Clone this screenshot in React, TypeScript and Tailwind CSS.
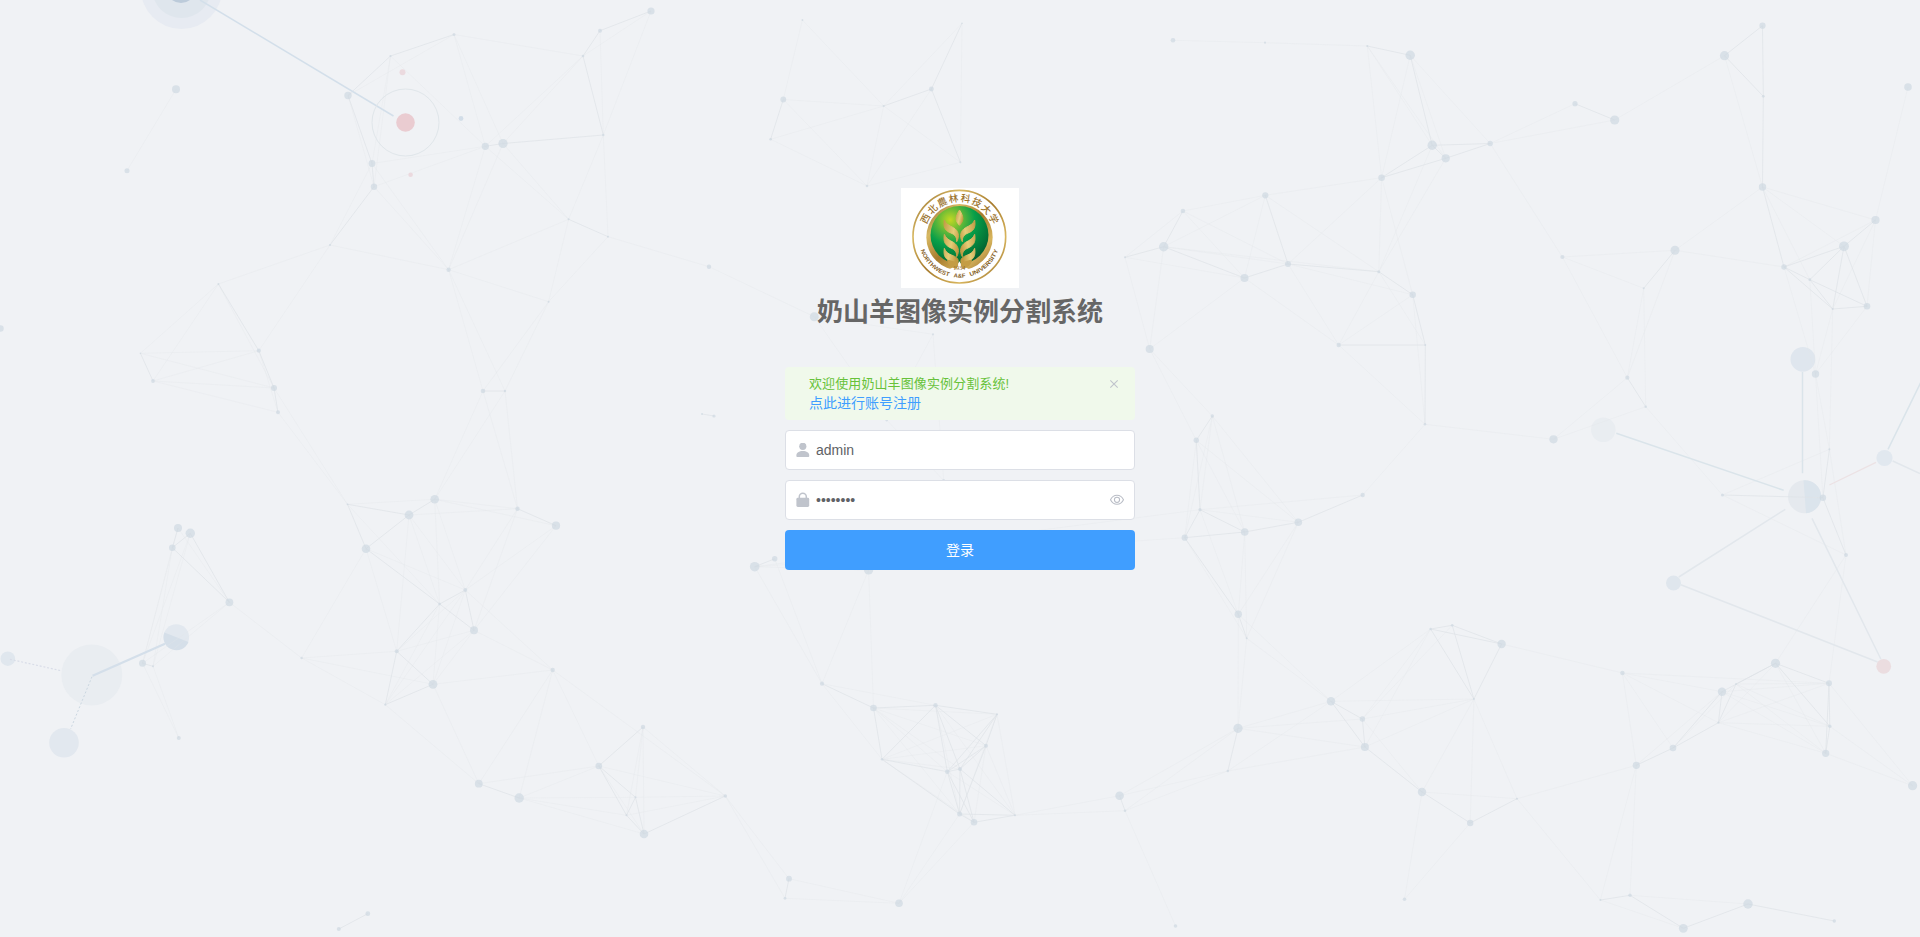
import { useState } from "react";

type Node = [number, number, number];

const nodes: Record<string, Node> = {
  a0: [176, 89.3, 4], a1: [127, 170.7, 2.5], a2: [348, 95.5, 3.7], a3: [390.5, 56, 1.1], a4: [454, 34.5, 1.5],
  a5: [583, 56, 1.3], a6: [600, 30.7, 2], a7: [651, 11, 3.6], a8: [603.3, 135, 1.2], a9: [503, 143.5, 4.6],
  a10: [485.3, 146.3, 3.6], a11: [372, 163.5, 3.4], a12: [374, 186.7, 3.2], a13: [330, 245, 1.1], a14: [448.6, 269.7, 2.2],
  a15: [568.6, 219.3, 1], a16: [608, 236.7, 1], a17: [548.6, 301.7, 1], a18: [218.4, 284, 1], a19: [709, 266.7, 2.2],
  b0: [0.5, 328.5, 3.2], b1: [140.4, 353.3, 0.7], b2: [153, 381, 1.9], b3: [258.8, 350.7, 2.1], b4: [274, 388, 3],
  b5: [278, 412.3, 2], b6: [483, 391, 2.3], b7: [505, 391, 1.2], b8: [347.5, 504.3, 0.9], b9: [434.7, 499.3, 4.3],
  b10: [409, 515, 4.4], b11: [517.5, 508.7, 2.2], b12: [556, 525.7, 4.1], b13: [366, 548.7, 4.3], b14: [178, 528, 4],
  b15: [190.3, 533.3, 4.7], b16: [172.3, 547.7, 3.3], b17: [229.4, 602.3, 3.9], b18: [465.3, 590, 2], b19: [439.6, 604, 1.3],
  c0: [474, 630.3, 4], c1: [396.7, 651.3, 2], c2: [301.6, 658, 1.2], c3: [433, 684.3, 4.4], c4: [385.3, 704.7, 1.1],
  c5: [552.7, 670, 2.2], c6: [478.8, 783.7, 3.9], c7: [519.2, 798, 4.7], c8: [598.8, 766, 3.3], c9: [635.5, 797.3, 1],
  c10: [626.5, 815.3, 1], c11: [142.5, 663.3, 3.5], c12: [153, 666.3, 1], c13: [178.8, 738, 2], c14: [338.8, 929, 2], c15: [367.8, 913.7, 2.4],
  d0: [754.7, 566.7, 4.8], d0b: [774.7, 558.8, 2.7], d1: [868.6, 570, 4.6], d2: [822, 683.7, 2.1], d3: [873.5, 708, 3.3],
  d4: [935.5, 705.3, 2.2], d5: [997, 714.3, 1], d6: [986, 745.7, 2], d7: [882, 759.3, 1.2], d8: [947.3, 771.7, 2.3],
  d9: [960, 769, 2], d10: [959.6, 814, 2.5], d11: [974, 822.3, 3.3], d12: [1015, 815.3, 1], d13: [1119.6, 795.7, 4.3],
  d14: [1125, 810.7, 1.3], d15: [1227.8, 771, 1.2], d16: [1238, 728.3, 4.6], d17: [643, 727, 2.2], d18: [725.3, 796, 1.8],
  d19: [644, 834, 4.3], d20: [789, 878.7, 2.9], d21: [785, 898.3, 1.4], d22: [899, 903.3, 3.8], d23: [1175.5, 926, 1.8],
  e0: [1149.7, 349, 4], e1: [1212.3, 416, 1.7], e2: [1196.3, 440.3, 2.7], e3: [1200, 509.7, 1.6], e4: [1184.7, 537.7, 3.1],
  e5: [1244.7, 532, 3.8], e6: [1298.3, 522.3, 3.8], e7: [1362.7, 495, 2.2], e8: [1238.3, 614.3, 3.7], e9: [1246.7, 638.3, 1], e10: [1338.7, 345, 2.2],
  f0: [802.4, 20, 0.9], f1: [962, 23.3, 0.8], f2: [783.3, 99.5, 2.9], f3: [770.6, 139.3, 1.3], f4: [883.7, 106, 1.1],
  f5: [931.4, 89, 2.4], f6: [960.4, 162.3, 1], f7: [867, 186, 1.3], f8: [1173, 40.3, 2.3], f9: [1265, 42.7, 1.1],
  f10: [1265.3, 195.3, 3.1], f11: [1182.9, 211, 2.3], f12: [1163.7, 246.7, 4.7], f13: [1125, 257.3, 1], f14: [1244.5, 278, 4],
  g0: [1367.3, 46, 1.1], g1: [1410.2, 55.3, 4.7], g2: [1432.2, 145.3, 4.7], g3: [1445.7, 158.3, 4.1], g4: [1490.2, 143.5, 2.7],
  g5: [1381.6, 177.7, 3.3], g6: [1575, 103.7, 2.6], g7: [1614.7, 120, 4.6], g8: [1724.5, 55.7, 4.6], g9: [1762.5, 25.7, 3.1],
  g10: [1763.3, 96.3, 1.4], g11: [1908, 87, 3.8], g12: [1762.5, 187, 3.7], g13: [1875.5, 220, 4.1], g14: [1844, 246.3, 4.9],
  g15: [1784, 267, 2.7], g16: [1809.8, 279.7, 1.4], g17: [1867, 306.3, 3.3], g18: [1832.7, 309, 1], g19: [1675, 250.3, 4.5],
  g20: [1562.4, 257, 2.1], g21: [1643.7, 288.3, 1], g22: [1288, 264, 3], g23: [1378.8, 271.7, 1.5], g24: [1412.7, 294.7, 3.2],
  h1: [1425.3, 345, 0.9], h2: [1425, 424.3, 1.3], h3: [1553.5, 439.3, 4.1], h4: [1627.3, 377.7, 2.1], h5: [1645.7, 406.7, 1.3],
  h6: [1815.5, 374, 3.7], h7: [1829.4, 449.3, 1], h8: [1822.9, 497.7, 3.2], h9: [1722.4, 495, 1.5], h10: [1846, 555, 2],
  i0: [1430.6, 629, 1.2], i1: [1452.2, 625.3, 1.3], i2: [1501.6, 644, 4.2], i3: [1473.9, 699, 1], i4: [1331, 701.3, 4.2],
  i5: [1362.4, 719, 2.7], i6: [1364.9, 747, 4], i7: [1422, 792, 4.2], i8: [1470.2, 823, 3.2], i9: [1517, 798.7, 1],
  i10: [1404.5, 899.3, 1.8], i11: [1622.4, 673, 2.2], i12: [1722, 691.7, 4.2], i13: [1775.5, 663.3, 4.6], i14: [1829, 683.3, 3],
  i15: [1829.8, 726.3, 1.7], i16: [1825.7, 753.3, 3.6], i17: [1718.4, 722.7, 1.1], i18: [1673, 748, 3.3], i19: [1636.3, 765.3, 3.6],
  i20: [1912.6, 785.7, 4.6], i21: [1736, 684, 0.9], i22: [1600.4, 900, 1], i23: [1630, 895.3, 1.7], i24: [1683.3, 928.3, 4.4],
  i25: [1748, 904, 4.7], i26: [1834.3, 921, 1.7],
  k0: [814.3, 316.7, 4.5], k1: [933, 334.3, 1.1], k2: [886.7, 420, 1.4], k3: [943.7, 480.5, 1.6], k4: [702, 414, 1], k5: [714, 416, 1.6],
};

const strongEdges =
  "a2-a3 a3-a4 a2-a11 a11-a12 a10-a9 a9-a8 a5-a6 a6-a7 a5-a8 a12-a13 a15-a16 a18-b3 b1-b2 b3-b4 b4-b5 b6-b7 b8-b10 b8-b13 b9-b10 b10-b13 b11-b12 " +
  "b14-b16 b15-b16 b16-b17 b15-b17 b18-b19 b18-c0 b19-c0 b13-b19 b19-c1 c1-c3 c1-c4 c3-c4 c6-c7 c8-c9 c8-c10 c9-c10 c8-d17 c11-c12 c14-c15 " +
  "d0-d0b d2-d3 d3-d4 d4-d5 d3-d7 d5-d6 d4-d6 d4-d7 d4-d8 d4-d9 d5-d8 d5-d9 d6-d8 d6-d9 d6-d10 d7-d8 d7-d10 d8-d9 d8-d10 d8-d11 d9-d10 d9-d11 d9-d12 d10-d11 d10-d12 d11-d12 " +
  "d13-d14 d15-d16 d20-d21 d19-d18 c10-d19 c9-d19 e1-e2 e3-e4 e3-e5 e4-e5 e5-e6 e6-e7 e8-e9 e2-e3 e4-e8 f2-f3 f4-f5 f1-f5 f5-f6 f12-f13 f11-f12 f12-f14 f14-g22 f10-g22 " +
  "g0-g1 g1-g2 g2-g3 g2-g4 g3-g4 g2-g5 g3-g5 g6-g7 g8-g9 g8-g10 g9-g10 g10-g12 g13-g14 g14-g15 g14-g16 g15-g16 g16-g17 g16-g18 g17-g18 g14-g17 g14-g18 g15-g18 g12-g15 " +
  "g19-g21 g23-g24 g22-g23 e10-h1 g24-h1 h1-h2 h4-h5 h7-h8 h8-h10 h9-h8 i0-i1 i1-i2 i0-i2 i0-i3 i1-i3 i2-i3 i4-i5 i5-i6 i4-i6 i6-i7 i7-i8 i8-i9 " +
  "i12-i13 i13-i14 i14-i15 i14-i16 i15-i16 i17-i18 i18-i19 i12-i17 i12-i18 i17-i21 i21-i13 i13-i15 i22-i23 i23-i24 i24-i25 i25-i26 k4-k5";

const faintEdges =
  "a0-a1 a2-a4 a2-a12 a3-a11 a3-a12 a3-a10 a4-a5 a4-a10 a4-a9 a5-a7 a6-a8 a7-a8 a5-a10 a5-a9 a8-a15 a8-a16 a10-a11 a10-a12 a9-a15 a10-a15 a9-a14 a10-a14 a11-a13 a11-a14 a12-a14 a13-a14 a13-a18 a14-a15 a14-a17 a15-a17 a16-a17 a16-a19 a19-k0 " +
  "a13-b3 a14-b6 a14-b7 a17-b6 a17-b7 a18-b1 a18-b2 a18-b4 b1-b3 b1-b4 b2-b3 b2-b4 b2-b5 b3-b5 b4-b8 b5-b8 b6-b9 b7-b9 b6-b11 b7-b11 b8-b9 b9-b11 b9-b12 b10-b11 b9-b18 b9-b19 b10-b18 b10-b19 b10-c1 b11-b18 b12-b18 b13-b18 b13-c1 b13-c2 b14-b17 b8-b19 " +
  "b11-c0 b12-c0 b14-c11 b16-c11 b15-c11 b16-c12 b15-c12 b17-c11 b17-c12 b17-c2 b18-c1 b18-c3 b18-c5 b18-c4 b19-c3 b19-c4 c0-c1 c0-c3 c0-c4 c0-c5 c1-c2 c2-c3 c2-c4 c3-c5 c3-c6 c4-c6 c5-c6 c5-c7 c5-c8 c5-d18 c6-c8 c7-c8 c7-c9 c7-c10 c7-d19 c8-d18 c9-d17 c10-d17 c9-d18 c10-d18 c11-c13 c12-c13 d17-d18 d17-d19 c8-d19 " +
  "d0-d1 d0-d2 d0b-d2 d1-d2 d1-d3 d2-d4 d2-d7 d3-d5 d3-d6 d3-d8 d3-d9 d3-d10 d4-d10 d4-d12 d5-d7 d5-d12 d5-d10 d6-d7 d6-d11 d6-d12 d7-d9 d7-d11 d8-d12 d8-d22 d10-d22 d11-d22 d12-d13 d12-d14 d13-d15 d13-d16 d14-d15 d14-d16 d14-d23 d18-d20 d18-d21 d20-d22 d21-d22 " +
  "e0-e1 e0-e2 e1-e3 e1-e4 e1-e5 e1-e6 e2-e4 e2-e5 e2-e6 e3-e6 e3-e8 e4-e9 e5-e8 e5-e9 e6-e8 e6-e9 e3-e7 e3-d0 e4-d0 e8-d16 e9-d16 e9-i4 e8-i4 d16-i4 d16-i5 d16-i6 d15-i4 d15-i6 e0-f13 e0-f12 e0-f14 f14-e10 f10-f11 f10-f12 f10-f14 f11-f14 f11-f13 f13-f14 f12-g22 f12-g23 f11-g22 f10-g23 f10-g5 " +
  "f0-f2 f0-f4 f1-f4 f1-f6 f2-f4 f2-f7 f3-f4 f3-f7 f4-f6 f4-f7 f5-f7 f6-f7 f8-f9 f9-g0 g0-g2 g0-g3 g0-g5 g1-g3 g1-g4 g1-g5 g2-g23 g3-g23 g4-g6 g4-g7 g4-g20 g5-g22 g5-g23 g5-g24 g7-g8 g8-g12 g11-g13 g12-g13 g12-g14 g12-g16 g12-g19 g13-g15 g13-g17 g13-g18 g19-g15 g19-g20 g20-g21 g19-h4 g21-h4 g21-h5 g20-h4 " +
  "g22-e10 g23-e10 g24-e10 g23-h1 g24-h2 e10-h2 g22-g24 g15-h6 g16-h6 g17-h6 g18-h6 g18-h7 h2-h3 h2-e7 h3-h4 h3-h5 h5-h9 h6-h7 h6-h8 h7-h9 h7-h10 h9-h10 h10-i13 h10-i14 i0-i4 i0-i5 i0-i6 i1-i5 i3-i4 i3-i5 i3-i6 i3-i7 i3-i8 i3-i9 i5-i7 i7-i9 i7-i10 i8-i10 i9-i19 i9-i22 i2-i11 " +
  "i11-i12 i11-i14 i11-i17 i11-i18 i11-i19 i12-i14 i12-i15 i12-i16 i12-i19 i13-i16 i13-i17 i14-i17 i14-i20 i15-i17 i15-i20 i16-i17 i16-i20 i16-i21 i15-i21 i14-i21 i18-i21 i19-i22 i19-i23 i22-i24 i23-i25 k0-k1 k0-k2 k1-k2 k1-k3 k2-k3";

const toPath = (list: string) =>
  list
    .split(" ")
    .map((edge) => {
      const [a, b] = edge.split("-").map((key) => nodes[key]);
      return `M${a[0]} ${a[1]}L${b[0]} ${b[1]}`;
    })
    .join("");

function Constellation() {
  return (
    <svg className="absolute inset-0 h-full w-full" viewBox="0 0 1920 937" fill="none" aria-hidden="true">
      <g>
        <circle cx="181.5" cy="-11.7" r="40.7" fill="#e7ebf2" />
        <circle cx="181.5" cy="-11.2" r="29.3" fill="#dfe6ed" />
        <circle cx="181" cy="-12" r="15" fill="#bccbda" />
        <circle cx="91.8" cy="675" r="30.5" fill="#e9edf1" />
        <circle cx="176.3" cy="637" r="12.8" fill="#e2e8ef" />
        <path d="M164.4 632.5A12.8 12.8 0 1 0 188.5 642Z" fill="#d5dfe9" />
        <circle cx="64" cy="742.7" r="14.8" fill="#e2e8ef" />
        <circle cx="7.8" cy="658.7" r="7.3" fill="#e0e7ee" />
        <circle cx="1802.9" cy="359.3" r="12.4" fill="#dfe6ee" />
        <circle cx="1603.3" cy="429.7" r="12.3" fill="#e9edf1" />
        <circle cx="1804.5" cy="496.7" r="16.5" fill="#e5e9ee" />
        <path d="M1803.5 480.2A16.5 16.5 0 0 1 1806 513.2Z" fill="#dbe4ec" />
        <circle cx="1884.5" cy="458" r="8.1" fill="#e1e8ef" />
        <circle cx="1673.5" cy="583" r="7.5" fill="#dfe6ed" />
      </g>
      <path d={toPath(faintEdges)} stroke="#e1e4e9" strokeOpacity="0.35" strokeWidth="0.9" />
      <path d={toPath(strongEdges)} stroke="#dee2e7" strokeOpacity="0.7" strokeWidth="1" />
      <path d="M92.6 675.7L165 643.7" stroke="#d4dfea" strokeWidth="2.2" />
      <path d="M200 0L393.5 116" stroke="#d3dfea" strokeWidth="1.5" />
      <path d="M92 676.7L70.6 729" stroke="#cbd7e1" strokeDasharray="2 2" />
      <path d="M10 659.3L61 670.7" stroke="#d9dde8" strokeWidth="1.2" strokeDasharray="2 1.8" />
      <path d="M1802.5 372V473.3M1616.3 433.3L1783.7 490.3M1921 382L1888 449.3" stroke="#dae4ea" strokeWidth="1.5" />
      <path d="M1892.7 461L1920 473.5M1785.3 509.3L1678.8 577M1680.8 584.7L1877.6 662M1812 518.3L1880.8 659" stroke="#e2e7ec" strokeWidth="1.5" />
      <path d="M1829.4 485L1876 462.3" stroke="#ece2e4" strokeWidth="1.3" />
      <g fill="#cdd7e1" fillOpacity="0.65">
        {Object.entries(nodes).map(([key, [x, y, r]]) => (
          <circle key={key} cx={x} cy={y} r={r} />
        ))}
      </g>
      <circle cx="405.5" cy="122.5" r="33.5" stroke="#e0e6ea" />
      <circle cx="405.5" cy="122.5" r="9.3" fill="#eaccd1" />
      <circle cx="402.5" cy="72.3" r="3" fill="#ebdadf" />
      <circle cx="410.6" cy="174.7" r="2.3" fill="#ebd9de" />
      <circle cx="461" cy="118.5" r="2.4" fill="#d2dde8" />
      <circle cx="1883.7" cy="666.3" r="7.4" fill="#ebdde0" />
    </svg>
  );
}

const leaves =
  "M130 96C126 120 134 129 150 135C162 140 168 148 167 161C177 144 172 127 157 119C143 112 134 107 130 96Z " +
  "M130 139C126 163 134 173 150 180C162 185 168 193 167 206C177 189 172 172 157 163C143 156 134 150 130 139Z " +
  "M130 181C126 206 136 215 149 220C160 224 167 228 169 230C176 214 168 208 156 203C142 198 134 192 130 181Z";

function Crest() {
  return (
    <svg className="h-[100px] w-[118px] bg-white" viewBox="0 0 354 300" role="img">
      <defs>
        <radialGradient id="field" cx="0.34" cy="0.24" r="0.85">
          <stop offset="0" stopColor="#c3d823" />
          <stop offset="0.28" stopColor="#57b53a" />
          <stop offset="0.5" stopColor="#089f49" />
          <stop offset="0.8" stopColor="#047638" />
          <stop offset="1" stopColor="#03552d" />
        </radialGradient>
        <linearGradient id="gold" x1="0" y1="0" x2="1" y2="1">
          <stop offset="0" stopColor="#8b6225" />
          <stop offset="0.25" stopColor="#d8b963" />
          <stop offset="0.5" stopColor="#a77b2d" />
          <stop offset="0.75" stopColor="#d8b55c" />
          <stop offset="1" stopColor="#92692a" />
        </linearGradient>
        <linearGradient id="leaf" x1="0" y1="0" x2="1" y2="0.6">
          <stop offset="0" stopColor="#c29a45" />
          <stop offset="0.6" stopColor="#e5cd78" />
          <stop offset="1" stopColor="#c39b43" />
        </linearGradient>
        <path id="motto" d="M57.9 185A123.5 123.5 0 0 0 292.1 185" />
      </defs>
      <circle cx="175" cy="146" r="139" fill="none" stroke="url(#gold)" strokeWidth="5" />
      <circle cx="175.5" cy="147.5" r="99.5" fill="url(#gold)" />
      <circle cx="175.5" cy="141" r="87" fill="url(#field)" />
      <path d="M175 220C167 234 152 241 132 250L175 264L218 250C198 241 183 234 175 220Z" fill="#fff" />
      <g fill="url(#leaf)" stroke="url(#leaf)" strokeWidth="3" strokeLinejoin="round">
        <path d="M175.5 66C162 87 162 98 175.5 112C189 98 189 87 175.5 66Z" />
        <path d={leaves} />
        <path d={leaves} transform="translate(351 0) scale(-1 1)" />
      </g>
      <path d="M138 215C155 217 170 222 172 231L166 243C148 237 140 229 138 215ZM213 215C196 217 181 222 179 231L185 243C203 237 211 229 213 215Z" fill="#c49d45" />
      <g fill="#9c742e" fontSize="29" fontWeight="500" textAnchor="middle" className="font-['Noto_Sans_CJK_SC',sans-serif]">
        {[..."西北農林科技大学"].map((char, i) => (
          <text key={char} x="175" y="41" transform={`rotate(${-62 + i * 17.8} 175 146)`}>
            {char}
          </text>
        ))}
      </g>
      <g fill="#86611f" fontSize="17.5" fontWeight="700" className="font-['Liberation_Sans',sans-serif]">
        <text>
          <textPath href="#motto" startOffset="2" textLength="120" lengthAdjust="spacingAndGlyphs">
            NORTHWEST
          </textPath>
        </text>
        <text>
          <textPath href="#motto" startOffset="136" textLength="37">
            A&amp;F
          </textPath>
        </text>
        <text>
          <textPath href="#motto" startOffset="187" textLength="119" lengthAdjust="spacingAndGlyphs">
            UNIVERSITY
          </textPath>
        </text>
      </g>
      <text x="175" y="246" fill="#8f6a2c" fontSize="18" textAnchor="middle" className="font-['Liberation_Serif',serif]">
        1934
      </text>
    </svg>
  );
}

function UserIcon() {
  return (
    <svg className="h-3.5 w-3.5" viewBox="0 0 14 14" fill="currentColor">
      <circle cx="6.8" cy="3.3" r="3.6" />
      <path d="M.4 12.3C.4 9.9 3 8.100 6.800 8.100S13.200 9.900 13.200 12.300V13.200A.8 .8 0 0 1 12.400 14H1.200A.8 .8 0 0 1 .4 13.200Z" />
    </svg>
  );
}

function LockIcon() {
  return (
    <svg className="h-3.5 w-3.5 overflow-visible" viewBox="0 0 14 14">
      <rect x="0.400" y="4.800" width="12.800" height="9.200" rx="1.400" fill="currentColor" />
      <path d="M3.300 6V3.800A3.500 3.500 0 0 1 10.300 3.800V6" fill="none" stroke="currentColor" strokeWidth="1.500" />
    </svg>
  );
}

function EyeIcon() {
  return (
    <svg className="h-3.5 w-3.5 text-[#b9bdc6]" viewBox="0 0 14 14" fill="none" stroke="currentColor">
      <path d="M.5 6.800C2 3.700 4.300 2.300 7 2.300S12 3.700 13.500 6.800C12 9.900 9.700 11.300 7 11.300S2 9.900 .5 6.800Z" strokeWidth="1.050" />
      <circle cx="7" cy="6.800" r="2.600" strokeWidth="1.050" />
    </svg>
  );
}

const fieldClass = "flex h-10 items-center rounded border border-[#dcdfe6] bg-white pl-[10px] pr-[10px] text-[#c0c4cc]";
const inputClass = "ml-[6px] min-w-0 flex-1 bg-transparent text-sm text-[#606266] outline-none";

export default function App() {
  const [user, setUser] = useState("admin");
  const [password, setPassword] = useState("password");

  return (
    <main className="relative flex h-[937px] w-full flex-col items-center overflow-hidden bg-[#f0f2f5] pt-[188px] font-['Liberation_Sans','Noto_Sans_CJK_SC',sans-serif]">
      <Constellation />
      <header className="relative flex flex-col items-center">
        <Crest />
        <h1 className="mt-[5px] text-[26px] leading-[38px] font-bold text-[#666]">奶山羊图像实例分割系统</h1>
      </header>
      <form className="relative mt-9 flex w-[350px] flex-col gap-[10px]" onSubmit={(e) => e.preventDefault()}>
        <div className="flex h-[53px] justify-between rounded bg-[#f0f9eb] pt-2 pr-4 pl-6">
          <div>
            <p className="text-[13px] leading-[18px] tracking-[0.1px] text-[#67c23a]">欢迎使用奶山羊图像实例分割系统!</p>
            <a className="block text-sm leading-5 text-[#409eff]">点此进行账号注册</a>
          </div>
          <button type="button" className="flex h-[18px] w-[10px] items-center text-[#c0c4cc]">
            <svg className="h-[10px] w-[10px]" viewBox="0 0 10 10" stroke="currentColor" strokeWidth="1.100">
              <path d="M1.300 1.300L8.700 8.700M8.700 1.300L1.300 8.700" />
            </svg>
          </button>
        </div>
        <label className={fieldClass}>
          <UserIcon />
          <input className={inputClass} value={user} onChange={(e) => setUser(e.target.value)} />
        </label>
        <label className={fieldClass}>
          <LockIcon />
          <input className={inputClass} type="password" value={password} onChange={(e) => setPassword(e.target.value)} />
          <EyeIcon />
        </label>
        <button className="h-10 rounded bg-[#409eff] text-sm text-white">登录</button>
      </form>
    </main>
  );
}
